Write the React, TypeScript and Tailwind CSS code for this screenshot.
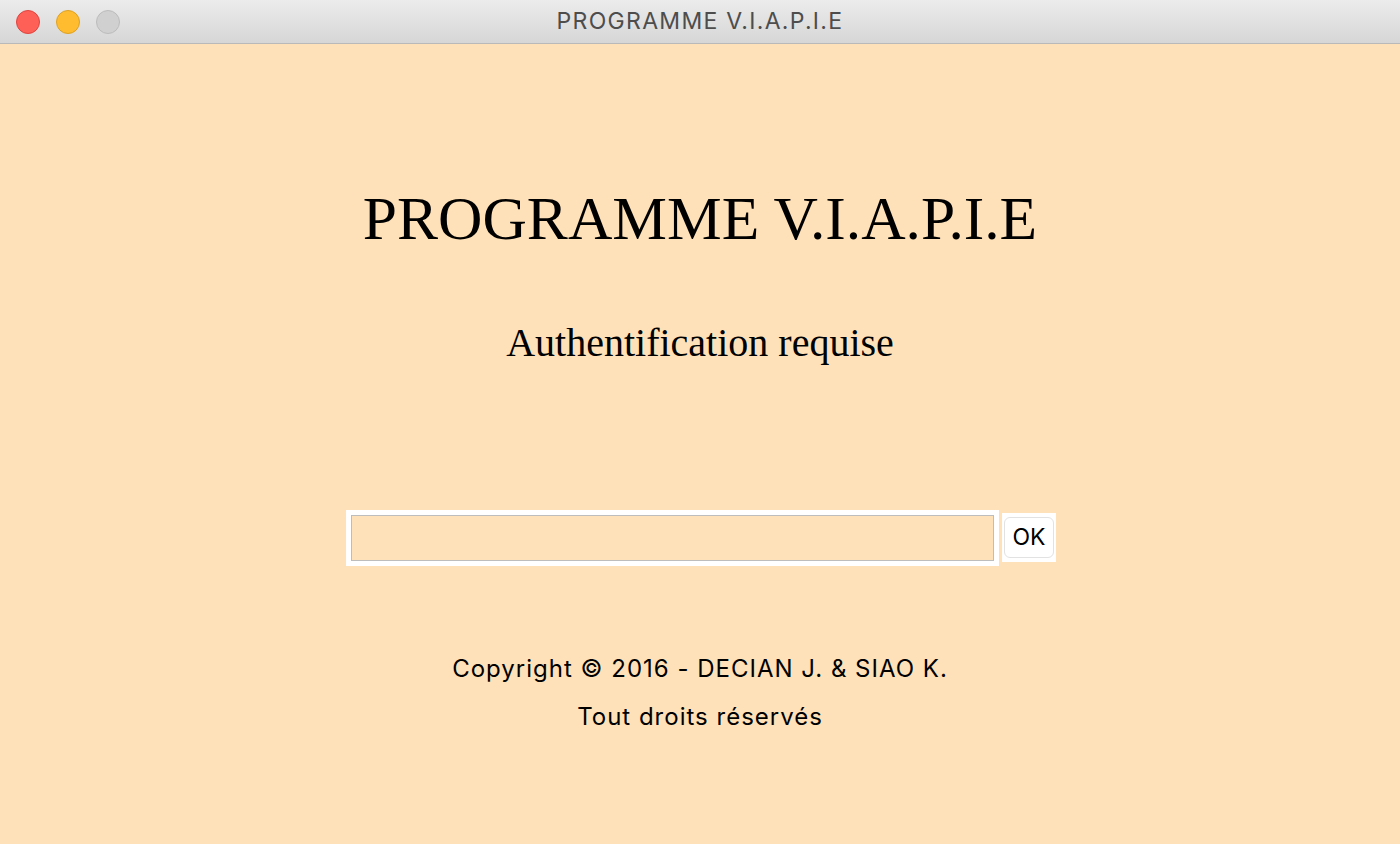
import React from "react";

function TitleBar() {
  return (
    <div className="relative flex items-center justify-center h-[44px] border-b border-[#b9b9b9] bg-gradient-to-b from-[#ececec] to-[#d6d6d6]">
      <div className="absolute left-[16px] top-[10px] flex gap-[16px]">
        <span className="block w-[24px] h-[24px] rounded-full bg-[#fe5f57] border border-[#e0443e]" />
        <span className="block w-[24px] h-[24px] rounded-full bg-[#febc2e] border border-[#dea123]" />
        <span className="block w-[24px] h-[24px] rounded-full bg-[#d0d0d0] border border-[#bcbcbc]" />
      </div>
      <span className="text-[23px] tracking-[1.3px] text-[#4d4d4d] font-['Inter',Arial,sans-serif]">
        PROGRAMME V.I.A.P.I.E
      </span>
    </div>
  );
}

function App() {
  return (
    <div className="flex flex-col w-[1400px] h-[844px] bg-[#fee1b8] overflow-hidden">
      <TitleBar />
      <div className="flex flex-col items-center flex-grow">
        <h1 className="mt-[144px] text-[61.5px] leading-none text-black font-['Liberation_Serif','Times_New_Roman',serif]">
          PROGRAMME V.I.A.P.I.E
        </h1>
        <h2 className="mt-[73px] text-[40px] leading-none text-black font-['Liberation_Serif','Times_New_Roman',serif]">
          Authentification requise
        </h2>
        <div className="flex items-center mt-[147px] ml-[2px]">
          <div className="p-[5px] bg-white">
            <input
              type="text"
              className="block w-[643px] h-[46px] bg-[#fee1b8] border border-[#bdbdbd] outline-none"
            />
          </div>
          <div className="flex items-center h-[49px] ml-[3px] px-[2px] bg-white">
            <button className="h-[41px] px-[7px] rounded-[6px] bg-white border border-[#e2e2e2] text-[23px] text-black font-['Inter',Arial,sans-serif]">
              OK
            </button>
          </div>
        </div>
        <div className="flex flex-col items-center mt-[79px] text-[24px] tracking-[1px] text-black leading-[48px] font-['Inter',Arial,sans-serif]">
          <p>Copyright © 2016 - DECIAN J. &amp; SIAO K.</p>
          <p>Tout droits réservés</p>
        </div>
      </div>
    </div>
  );
}

export default App;
